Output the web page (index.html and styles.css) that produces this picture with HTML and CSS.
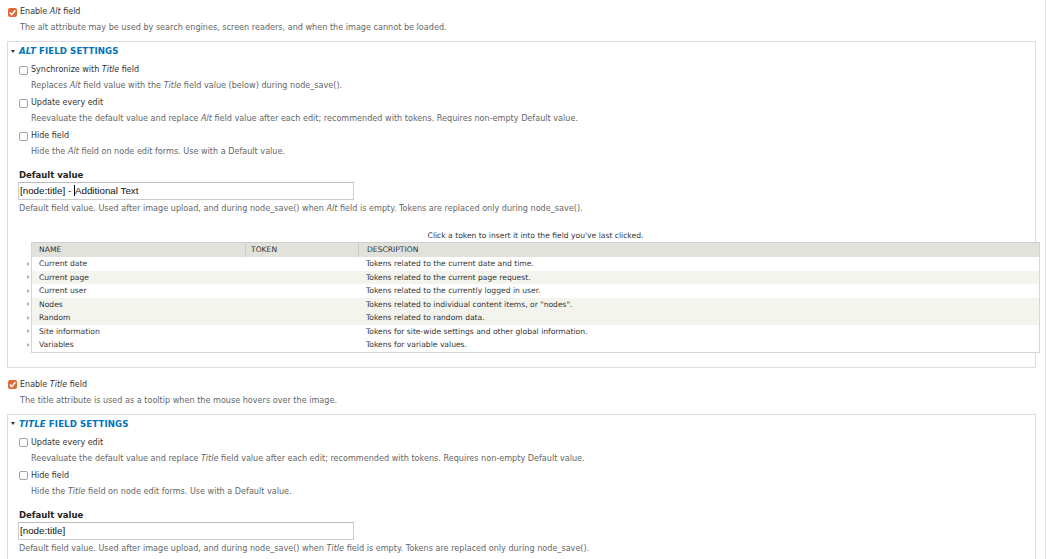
FILE: index.html
```html
<!DOCTYPE html>
<html>
<head>
<meta charset="utf-8">
<link rel="stylesheet" href="styles.css">
</head>
<body>
<div class="page">
  <div class="item top">
    <div class="cb-row"><span class="cb checked"><svg viewBox="0 0 9 9" width="9" height="9"><path d="M1.8 4.6 L3.8 6.6 L7.4 2.2" fill="none" stroke="#fff" stroke-width="1.5"/></svg></span><span>Enable <em>Alt</em> field</span></div>
    <div class="desc">The alt attribute may be used by search engines, screen readers, and when the image cannot be loaded.</div>
  </div>

  <div class="fs first">
    <div class="legend"><span class="arrow"></span><span><em>Alt</em> field settings</span></div>
    <div class="item first-item">
      <div class="cb-row"><span class="cb"></span><span>Synchronize with <em>Title</em> field</span></div>
      <div class="desc">Replaces <em>Alt</em> field value with the <em>Title</em> field value (below) during node_save().</div>
    </div>
    <div class="item">
      <div class="cb-row"><span class="cb"></span><span>Update every edit</span></div>
      <div class="desc">Reevaluate the default value and replace <em>Alt</em> field value after each edit; recommended with tokens. Requires non-empty Default value.</div>
    </div>
    <div class="item">
      <div class="cb-row"><span class="cb"></span><span>Hide field</span></div>
      <div class="desc">Hide the <em>Alt</em> field on node edit forms. Use with a Default value.</div>
    </div>
    <div class="text-item">
      <div class="label">Default value</div>
      <div class="input">[node:title] - <span class="caret"></span>Additional Text</div>
      <div class="desc flat">Default field value. Used after image upload, and during node_save() when <em>Alt</em> field is empty. Tokens are replaced only during node_save().</div>
    </div>
    <div class="tokens">
      <div class="token-help">Click a token to insert it into the field you've last clicked.</div>
      <div class="ttable">
        <div class="trow head"><div class="c1">Name</div><div class="c2">Token</div><div class="c3">Description</div></div>
        <div class="trow"><div class="c1 exp">Current date</div><div class="c2"></div><div class="c3">Tokens related to the current date and time.</div></div>
        <div class="trow alt"><div class="c1 exp">Current page</div><div class="c2"></div><div class="c3">Tokens related to the current page request.</div></div>
        <div class="trow"><div class="c1 exp">Current user</div><div class="c2"></div><div class="c3">Tokens related to the currently logged in user.</div></div>
        <div class="trow alt"><div class="c1 exp">Nodes</div><div class="c2"></div><div class="c3">Tokens related to individual content items, or "nodes".</div></div>
        <div class="trow alt"><div class="c1 exp">Random</div><div class="c2"></div><div class="c3">Tokens related to random data.</div></div>
        <div class="trow"><div class="c1 exp">Site information</div><div class="c2"></div><div class="c3">Tokens for site-wide settings and other global information.</div></div>
        <div class="trow"><div class="c1 exp">Variables</div><div class="c2"></div><div class="c3">Tokens for variable values.</div></div>
      </div>
    </div>
  </div>

  <div class="item top second">
    <div class="cb-row"><span class="cb checked"><svg viewBox="0 0 9 9" width="9" height="9"><path d="M1.8 4.6 L3.8 6.6 L7.4 2.2" fill="none" stroke="#fff" stroke-width="1.5"/></svg></span><span>Enable <em>Title</em> field</span></div>
    <div class="desc">The title attribute is used as a tooltip when the mouse hovers over the image.</div>
  </div>

  <div class="fs">
    <div class="legend"><span class="arrow"></span><span><em>Title</em> field settings</span></div>
    <div class="item first-item">
      <div class="cb-row"><span class="cb"></span><span>Update every edit</span></div>
      <div class="desc">Reevaluate the default value and replace <em>Title</em> field value after each edit; recommended with tokens. Requires non-empty Default value.</div>
    </div>
    <div class="item">
      <div class="cb-row"><span class="cb"></span><span>Hide field</span></div>
      <div class="desc">Hide the <em>Title</em> field on node edit forms. Use with a Default value.</div>
    </div>
    <div class="text-item">
      <div class="label">Default value</div>
      <div class="input">[node:title]</div>
      <div class="desc flat">Default field value. Used after image upload, and during node_save() when <em>Title</em> field is empty. Tokens are replaced only during node_save().</div>
    </div>
  </div>
</div>
</body>
</html>
```

FILE: styles.css
```css
html, body {
  margin: 0;
  padding: 0;
  background: #fff;
}
body {
  font-family: "DejaVu Sans", Verdana, sans-serif;
  font-size: 8px;
  color: #333;
}
.page {
  width: 1045px;
  min-height: 559px;
  border-right: 1px solid #e2e2e2;
  padding-top: 5px;
  box-sizing: content-box;
}
em {
  font-style: italic;
}
.item {
  margin-bottom: 4px;
}
.item.top {
  padding-left: 8px;
  margin-bottom: 0;
}
.item.top.second {
  margin-top: 10px;
}
.cb-row {
  display: flex;
  align-items: center;
  gap: 3px;
  height: 14px;
  line-height: 14px;
  white-space: nowrap;
}
.cb {
  display: inline-block;
  width: 9px;
  height: 9px;
  box-sizing: border-box;
  border: 1px solid #a3a3a3;
  border-radius: 2px;
  background: #fff;
  flex: none;
}
.cb.checked {
  border: none;
  background: #e0693a;
  border-radius: 2px;
}
.cb svg {
  display: block;
}
.desc {
  color: #666;
  font-size: 8.1px;
  line-height: 14px;
  margin-top: 1px;
  padding-left: 12px;
  white-space: nowrap;
}
.desc.flat {
  padding-left: 0;
  margin-top: 1px;
}
.fs {
  margin: 7px 0 0 7px;
  width: 1029px;
  box-sizing: border-box;
  border: 1px solid #dcdcdc;
  padding: 2px 0 14px 11px;
}
.legend {
  display: flex;
  align-items: center;
  gap: 4px;
  height: 14px;
  line-height: 14px;
  margin-left: -8px;
  color: #0074bd;
  font-weight: bold;
  font-size: 8.6px;
  text-transform: uppercase;
  letter-spacing: 0.1px;
}
.arrow {
  width: 0;
  height: 0;
  border-left: 2.5px solid transparent;
  border-right: 2.5px solid transparent;
  border-top: 3px solid #333;
  flex: none;
}
.first-item {
  margin-top: 5px;
}
.text-item {
  margin-top: 11px;
}
.label {
  font-weight: bold;
  font-size: 8.5px;
  line-height: 13px;
  height: 13px;
  color: #222;
}
.input {
  width: 336px;
  height: 18px;
  box-sizing: border-box;
  border: 1px solid #ccc;
  border-top-color: #bbb;
  margin-left: -1px;
  padding-left: 1px;
  font-family: "Liberation Sans", Arial, sans-serif;
  font-size: 9.8px;
  line-height: 16px;
  color: #111;
  white-space: nowrap;
}
.caret {
  display: inline-block;
  width: 0;
  height: 11px;
  border-left: 1px solid #000;
  vertical-align: -2px;
}
.tokens {
  margin-top: 14px;
  margin-left: 12px;
  width: 1009px;
}
.token-help {
  text-align: center;
  font-size: 7.6px;
  line-height: 13px;
  height: 13px;
  color: #333;
}
.ttable {
  border: 1px solid #d6d6d6;
  border-top-color: #cfcfcf;
  font-size: 7.6px;
  color: #333;
}
.trow {
  display: grid;
  grid-template-columns: 213px 113px 1fr;
  height: 13.5px;
  line-height: 13.5px;
  background: #fff;
}
.trow.alt {
  background: #f3f4ee;
}
.trow.head {
  height: 14px;
  line-height: 14px;
  background: #e1e2dc;
  text-transform: uppercase;
}
.trow > div {
  padding-left: 7px;
  white-space: nowrap;
}
.trow.head .c2,
.trow.head .c3 {
  border-left: 1px solid #cbccc6;
}
.trow.head .c2 {
  padding-left: 5px;
}
.trow .c3 {
  padding-left: 8px;
}
.c1.exp {
  position: relative;
}
.c1.exp::before {
  content: "";
  position: absolute;
  left: -5px;
  top: 4.5px;
  border-top: 2.5px solid transparent;
  border-bottom: 2.5px solid transparent;
  border-left: 3px solid #b5b5b5;
}
```
